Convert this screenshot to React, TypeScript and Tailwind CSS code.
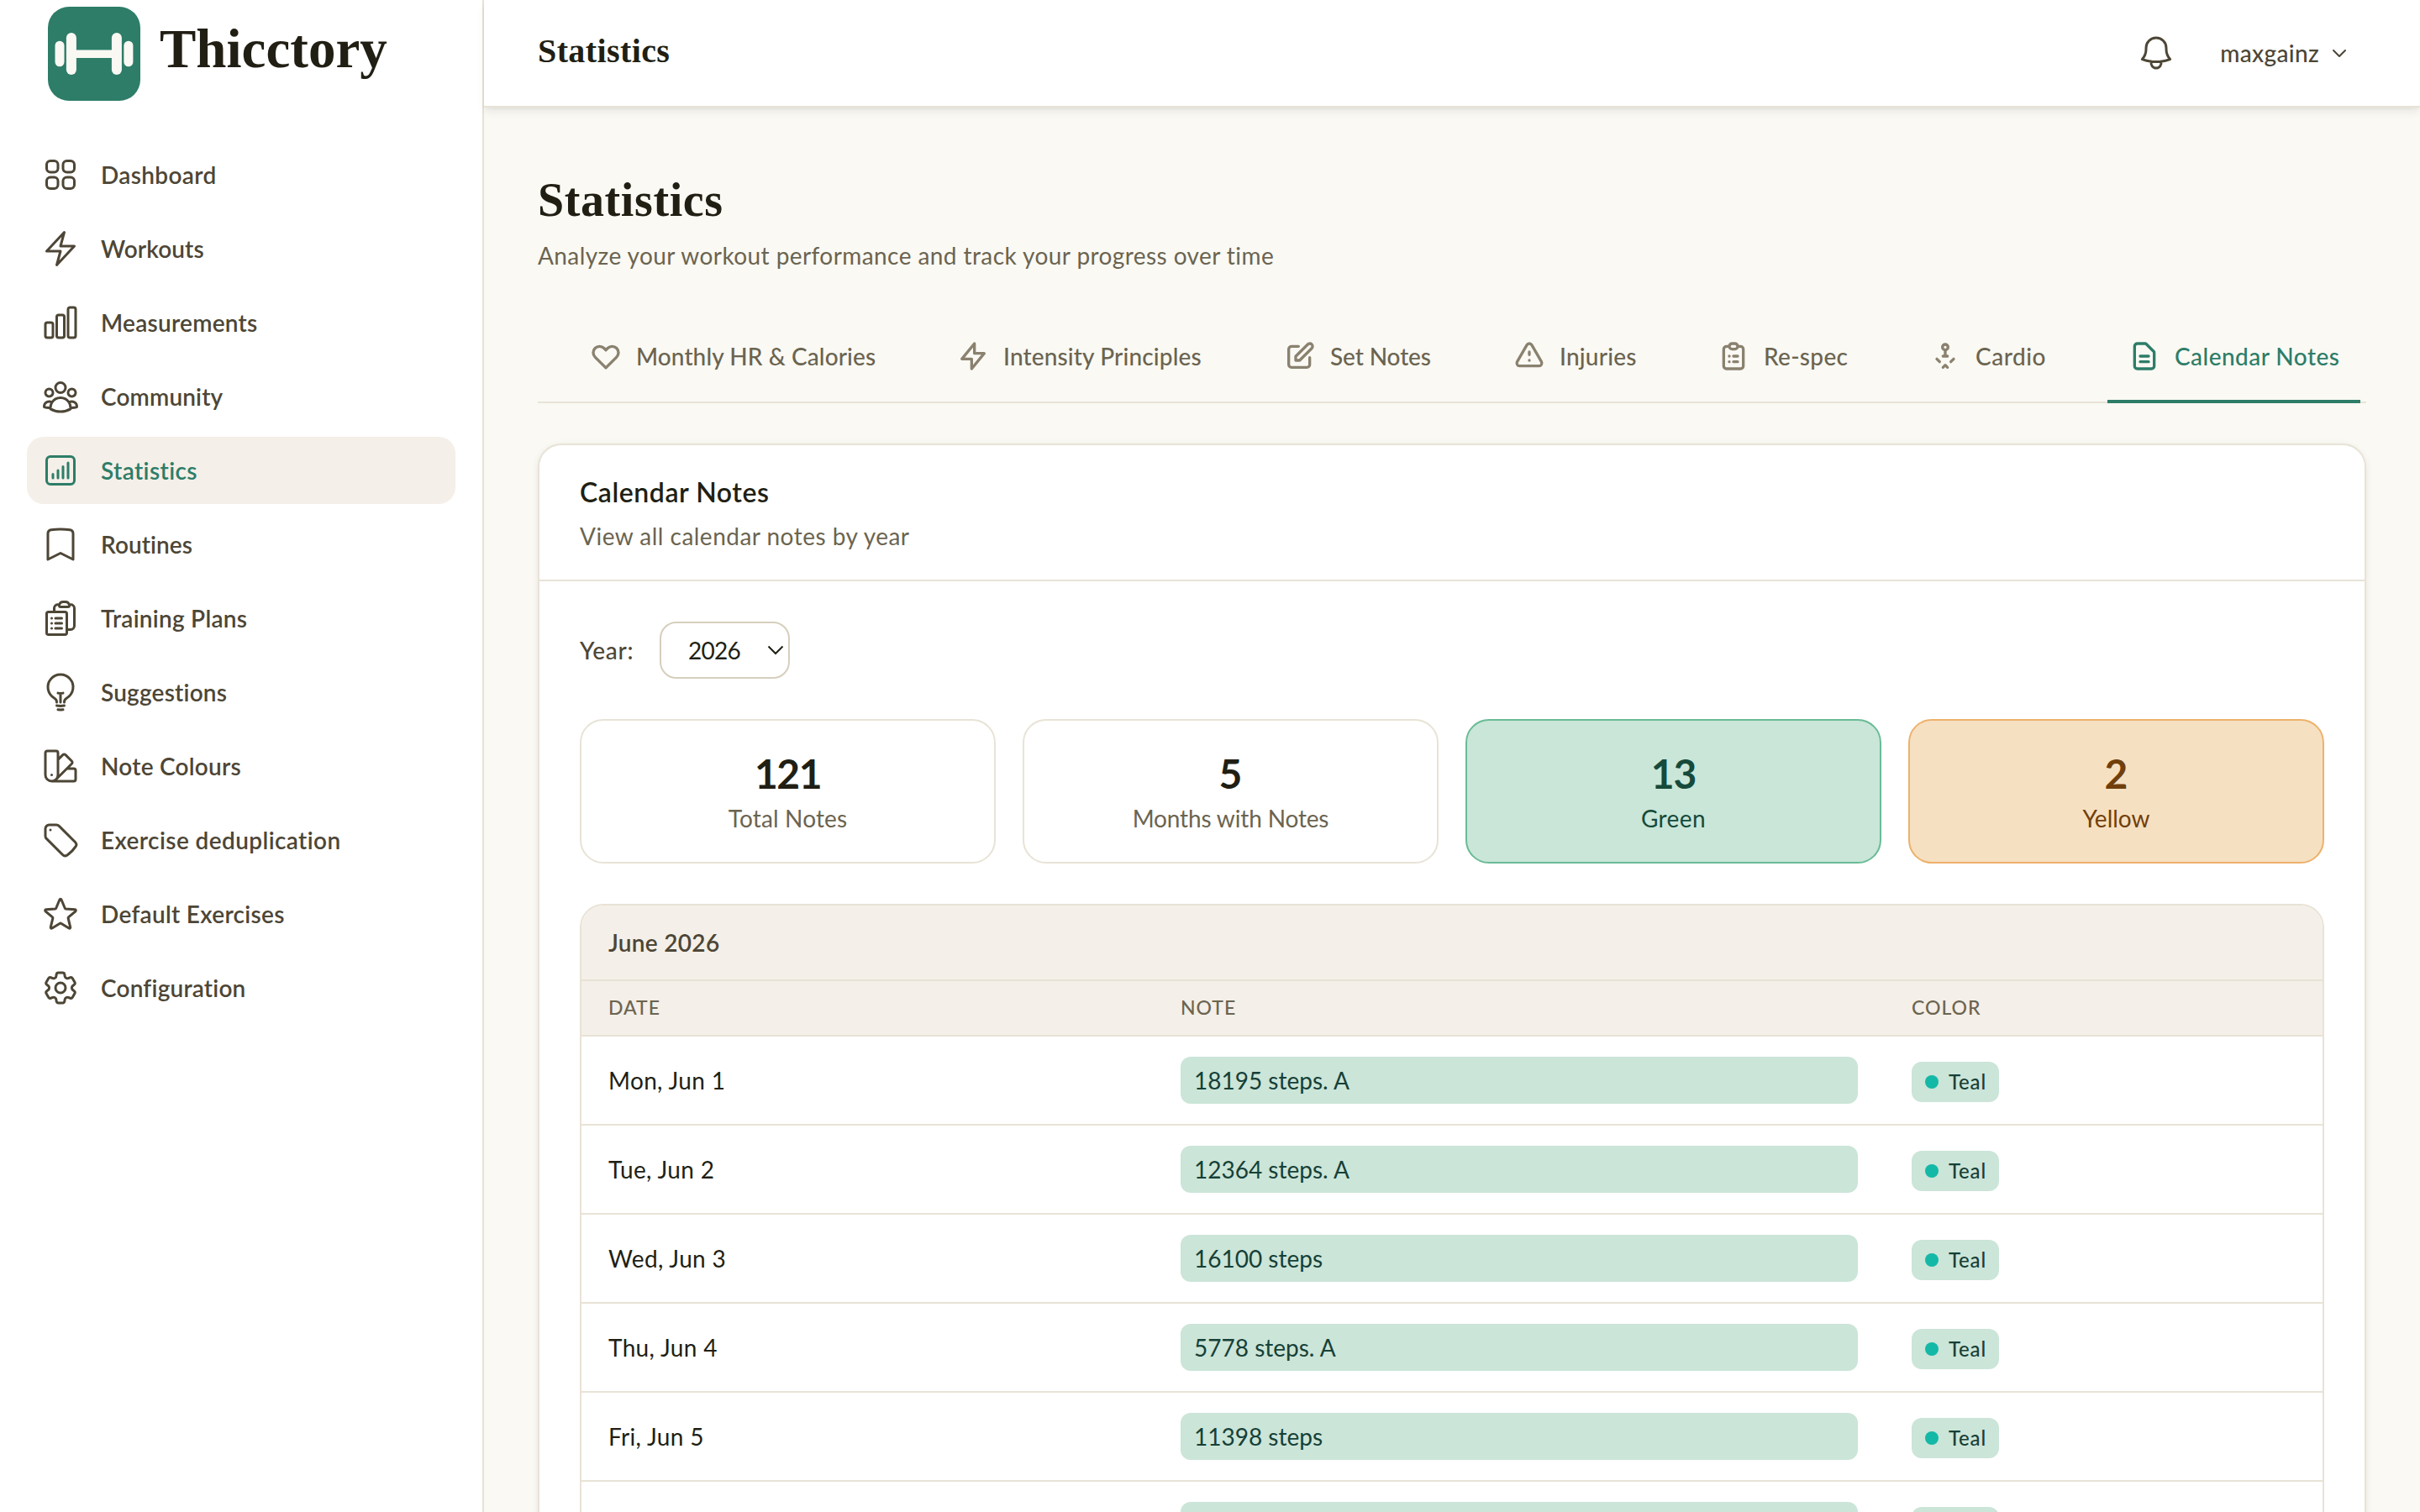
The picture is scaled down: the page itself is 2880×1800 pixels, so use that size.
import type { ComponentType, ReactNode } from "react";
import {
  HiOutlineBell,
  HiOutlineBolt,
  HiOutlineBookmark,
  HiOutlineChartBar,
  HiOutlineChartBarSquare,
  HiOutlineClipboardDocumentList,
  HiOutlineCog6Tooth,
  HiOutlineLightBulb,
  HiOutlineSquares2X2,
  HiOutlineStar,
  HiOutlineSwatch,
  HiOutlineTag,
  HiOutlineUserGroup,
} from "react-icons/hi2";
import { clsx } from "clsx";

type IconType = ComponentType<{ className?: string }>;

const NAV: { label: string; icon: IconType; tracking: string }[] = [
  { label: "Dashboard", icon: HiOutlineSquares2X2, tracking: "tracking-[0.35px]" },
  { label: "Workouts", icon: HiOutlineBolt, tracking: "tracking-[0.1px]" },
  { label: "Measurements", icon: HiOutlineChartBar, tracking: "tracking-[0.25px]" },
  { label: "Community", icon: HiOutlineUserGroup, tracking: "tracking-[0.15px]" },
  { label: "Statistics", icon: HiOutlineChartBarSquare, tracking: "tracking-[0.4px]" },
  { label: "Routines", icon: HiOutlineBookmark, tracking: "tracking-[0.05px]" },
  { label: "Training Plans", icon: HiOutlineClipboardDocumentList, tracking: "tracking-[0.25px]" },
  { label: "Suggestions", icon: HiOutlineLightBulb, tracking: "tracking-[0.2px]" },
  { label: "Note Colours", icon: HiOutlineSwatch, tracking: "tracking-[0.25px]" },
  { label: "Exercise deduplication", icon: HiOutlineTag, tracking: "tracking-[0.4px]" },
  { label: "Default Exercises", icon: HiOutlineStar, tracking: "tracking-[0.3px]" },
  { label: "Configuration", icon: HiOutlineCog6Tooth, tracking: "tracking-[0.2px]" },
];

const TABS: { label: string; className: string; icon: ReactNode }[] = [
  {
    label: "Monthly HR & Calories",
    className: "w-[389px] tracking-[0.1px]",
    icon: (
      <path d="M4.318 6.318a4.5 4.5 0 000 6.364L12 20.364l7.682-7.682a4.5 4.5 0 00-6.364-6.364L12 7.636l-1.318-1.318a4.5 4.5 0 00-6.364 0z" />
    ),
  },
  {
    label: "Intensity Principles",
    className: "w-[341px] tracking-[0.15px]",
    icon: <path d="M13 10V3L4 14h7v7l9-11h-7z" />,
  },
  {
    label: "Set Notes",
    className: "w-[225px] tracking-[-0.1px]",
    icon: (
      <path d="M11 5H6a2 2 0 00-2 2v11a2 2 0 002 2h11a2 2 0 002-2v-5m-1.414-9.414a2 2 0 112.828 2.828L11.828 15H9v-2.828l8.586-8.586z" />
    ),
  },
  {
    label: "Injuries",
    className: "w-[195px] tracking-[0.2px]",
    icon: (
      <path d="M12 9v2m0 4h.01m-6.938 4h13.856c1.54 0 2.502-1.667 1.732-3L13.732 4c-.77-1.333-2.694-1.333-3.464 0L3.34 16c-.77 1.333.192 3 1.732 3z" />
    ),
  },
  {
    label: "Re-spec",
    className: "w-[204px] tracking-[0.3px]",
    icon: (
      <path d="M9 5H7a2 2 0 00-2 2v12a2 2 0 002 2h10a2 2 0 002-2V7a2 2 0 00-2-2h-2M9 5a2 2 0 002 2h2a2 2 0 002-2M9 5a2 2 0 012-2h2a2 2 0 012 2m-3 7h3m-3 4h3m-6-4h.01M9 16h.01" />
    ),
  },
  {
    label: "Cardio",
    className: "w-[189px] tracking-[0.5px]",
    icon: (
      <>
        <circle cx="12" cy="5.6" r="2" />
        <path d="M12 7.6V12m-1.6 0h3.2M6 14l2 2m10-2l-2 2m-5.6 4l1.6-1.6 1.6 1.6" />
      </>
    ),
  },
  {
    label: "Calendar Notes",
    className: "w-[301px] tracking-[0.45px]",
    icon: (
      <path d="M9 12h6m-6 4h6m2 5H7a2 2 0 01-2-2V5a2 2 0 012-2h5.586a1 1 0 01.707.293l5.414 5.414a1 1 0 01.293.707V19a2 2 0 01-2 2z" />
    ),
  },
];

const STATS = [
  { value: 121, label: "Total Notes", box: "border-[#e8e3d6] bg-white", num: "text-[#211f14] tracking-[-1.5px]", text: "text-[#6b6450] tracking-[0.15px]" },
  { value: 5, label: "Months with Notes", box: "border-[#e8e3d6] bg-white", num: "text-[#211f14]", text: "text-[#6b6450] tracking-[-0.15px]" },
  { value: 13, label: "Green", box: "border-[#69bb96] bg-[#c9e6d8]", num: "text-[#164a3b] tracking-[-1px]", text: "text-[#164a3b] tracking-[0.4px]" },
  { value: 2, label: "Yellow", box: "border-[#edb16b] bg-[#f6e0c2]", num: "text-[#713f0c]", text: "text-[#713f0c]" },
];

const NOTES = [
  { date: "Mon, Jun 1", note: "18195 steps. A", color: "Teal" },
  { date: "Tue, Jun 2", note: "12364 steps. A", color: "Teal" },
  { date: "Wed, Jun 3", note: "16100 steps", color: "Teal" },
  { date: "Thu, Jun 4", note: "5778 steps. A", color: "Teal" },
  { date: "Fri, Jun 5", note: "11398 steps", color: "Teal" },
  { date: "", note: "", color: "" },
];

function Logo() {
  return (
    <svg viewBox="0 0 110 112" className="h-28 w-[110px] shrink-0">
      <rect width="110" height="112" rx="25" fill="#2d7d68" />
      <g fill="#faf8f3">
        <rect x="8.5" y="40.7" width="11" height="30.6" rx="5.5" />
        <rect x="21.9" y="30.9" width="12" height="50.2" rx="6" />
        <rect x="32" y="51.4" width="46" height="9.6" rx="2" />
        <rect x="75.9" y="30.9" width="12" height="50.2" rx="6" />
        <rect x="90.4" y="40.7" width="11" height="30.6" rx="5.5" />
      </g>
    </svg>
  );
}

function Sidebar() {
  return (
    <aside className="w-[576px] shrink-0 border-r-2 border-[#e8e3d6] bg-white">
      <div className="flex h-32 items-center gap-[23px] pl-[57px]">
        <Logo />
        <span className="pb-3 font-['Liberation_Serif',serif] text-[65px] leading-[80px] font-bold text-[#211f14]">Thicctory</span>
      </div>
      <nav className="mt-10 flex flex-col gap-2 px-8">
        {NAV.map(({ label, icon: Icon, tracking }) => (
          <a
            key={label}
            className={clsx(
              "flex h-20 items-center gap-6 rounded-[20px] px-4 text-[28px] font-semibold",
              tracking,
              label === "Statistics" ? "bg-[#f4efe8] text-[#2d7d68]" : "text-[#4d4636]",
            )}
          >
            <Icon className="size-12 shrink-0" />
            {label}
          </a>
        ))}
      </nav>
    </aside>
  );
}

function Header() {
  return (
    <header className="relative flex h-32 shrink-0 items-center border-b-2 border-[#e8e3d6] bg-white pr-[84px] pl-16 shadow-[0_6px_10px_-1px_rgba(33,31,20,0.08),0_2px_4px_-1px_rgba(33,31,20,0.06)]">
      <h2 className="flex-1 pb-[4px] font-['Liberation_Serif',serif] text-[40px] leading-[48px] font-bold tracking-[0.4px] text-[#211f14]">Statistics</h2>
      <HiOutlineBell className="mr-[52px] size-12 text-[#4d4636]" />
      <span className="mr-3 text-[28px] font-medium tracking-[0.35px] text-[#4d4636]">maxgainz</span>
      <svg viewBox="0 0 24 24" fill="none" stroke="currentColor" strokeWidth="2" strokeLinecap="round" strokeLinejoin="round" className="size-6 text-[#4d4636]">
        <path d="M19 9l-7 7-7-7" />
      </svg>
    </header>
  );
}

function Tabs() {
  return (
    <nav className="mt-11 flex h-28 gap-12 border-b-2 border-[#e8e3d6] pl-[37px]">
      {TABS.map(({ label, className, icon }) => {
        const active = label === "Calendar Notes";
        return (
          <a
            key={label}
            className={clsx(
              "-mb-0.5 flex h-28 shrink-0 items-center gap-4 border-b-4 pt-[3px] pl-6 text-[28px] font-medium whitespace-nowrap",
              className,
              active ? "border-[#2d7d68] text-[#2d7d68]" : "border-transparent text-[#6b6450]",
            )}
          >
            <svg
              viewBox="0 0 24 24"
              fill="none"
              stroke="currentColor"
              strokeWidth="2"
              strokeLinecap="round"
              strokeLinejoin="round"
              className={clsx("size-10 shrink-0", !active && "text-[#8a816f]")}
            >
              {icon}
            </svg>
            {label}
          </a>
        );
      })}
    </nav>
  );
}

function NotesTable() {
  return (
    <div className="mt-12 overflow-hidden rounded-[28px] border-2 border-[#e8e3d6]">
      <div className="flex h-[90px] items-center border-b-2 border-[#e8e3d6] bg-[#f4efe8] px-8 text-[28px] font-semibold tracking-[0.3px] text-[#4d4636]">
        June 2026
      </div>
      <div className="grid h-[66px] grid-cols-[681px_870px_1fr] items-center border-b-2 border-[#e8e3d6] bg-[#f4efe8] text-[23px] font-medium tracking-[1px] text-[#6b6450] uppercase">
        <span className="px-8 pb-px">Date</span>
        <span className="px-8 pb-px">Note</span>
        <span className="px-8 pb-px">Color</span>
      </div>
      {NOTES.map((row, i) => (
        <div key={i} className="grid h-[106px] grid-cols-[681px_870px_1fr] items-center border-b-2 border-[#e8e3d6] text-[28px]">
          <div className="px-8 tracking-[0.35px] text-[#211f14]">{row.date}</div>
          <div className="px-8">
            <div className="flex h-14 items-center rounded-xl bg-[#cbe5d8] px-4 text-[#164037]">{row.note}</div>
          </div>
          <div className="px-8">
            <span className="mt-1 flex h-12 w-[104px] items-center gap-3 rounded-xl bg-[#cbe5d8] pl-4 text-[24px] font-medium tracking-[0.8px] text-[#164037]">
              <span className="size-4 rounded-full bg-[#14b8a6]" />
              {row.color}
            </span>
          </div>
        </div>
      ))}
    </div>
  );
}

function CalendarNotes() {
  return (
    <section className="mt-12 rounded-[28px] border-2 border-[#e8e3d6] bg-white shadow-[0_2px_8px_rgba(33,31,20,0.08)]">
      <div className="h-[162px] border-b-2 border-[#e8e3d6] px-12 pt-[32px]">
        <h3 className="text-[32px] leading-[48px] font-semibold tracking-[0.55px] text-[#211f14]">Calendar Notes</h3>
        <p className="mt-[8px] text-[28px] leading-10 tracking-[0.48px] text-[#6b6450]">View all calendar notes by year</p>
      </div>
      <div className="p-12">
        <div className="flex items-center gap-8">
          <span className="w-[63px] text-[28px] font-medium tracking-[0.7px] whitespace-nowrap text-[#4d4636]">Year:</span>
          <div className="flex h-[68px] w-[155px] items-center justify-between rounded-[20px] border-2 border-[#d6cfbd] pr-[5px] pl-[32px] text-[28px] tracking-[-0.7px] text-[#211f14]">
            2026
            <svg viewBox="0 0 20 20" fill="none" stroke="currentColor" strokeWidth="2" className="size-5">
              <path d="M1.5 5.5l8.5 8.5 8.5-8.5" />
            </svg>
          </div>
        </div>
        <div className="mt-12 grid grid-cols-4 gap-8">
          {STATS.map((s) => (
            <div key={s.label} className={clsx("h-[172px] rounded-[28px] border-2 pt-[31px] text-center", s.box)}>
              <div className={clsx("text-[48px] leading-[64px] font-bold", s.num)}>{s.value}</div>
              <div className={clsx("mt-px text-[28px] leading-10", s.text)}>{s.label}</div>
            </div>
          ))}
        </div>
        <NotesTable />
      </div>
    </section>
  );
}

export default function App() {
  return (
    <div className="flex h-[1800px] w-[2880px] overflow-hidden bg-[#faf9f4] font-['Lato','Open_Sans',sans-serif]">
      <Sidebar />
      <div className="flex min-w-0 flex-1 flex-col">
        <Header />
        <main className="min-h-0 flex-1 overflow-hidden px-16 pt-[74px]">
          <h1 className="font-['Liberation_Serif',serif] text-[56px] leading-[72px] font-bold tracking-[0.6px] text-[#211f14]">Statistics</h1>
          <p className="mt-[10px] text-[28px] leading-10 tracking-[0.42px] text-[#6b6450]">
            Analyze your workout performance and track your progress over time
          </p>
          <Tabs />
          <CalendarNotes />
        </main>
      </div>
    </div>
  );
}
